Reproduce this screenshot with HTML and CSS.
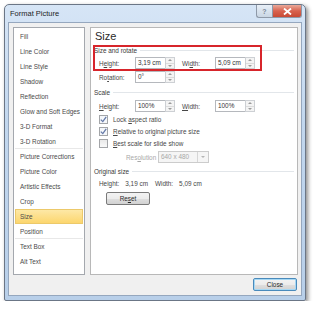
FILE: index.html
```html
<!DOCTYPE html>
<html lang="en">
<head>
    <meta charset="UTF-8">
    <title>Format Picture</title>
    <link rel="stylesheet" href="styles.css">
</head>
<body>
    <div class="window">
        <div class="titlebar">
            <span class="title">Format Picture</span>
            <div class="caption-btns">
                <span class="cap-help">?</span>
                <span class="cap-close">
                    <svg width="9" height="7" viewBox="0 0 9 7"><path d="M1 0.5 L8 6.5 M8 0.5 L1 6.5" stroke="#fff" stroke-width="1.8"/></svg>
                </span>
            </div>
        </div>
        <div class="client">
            <div class="main">
                <ul class="nav">
                    <li>Fill</li>
                    <li>Line Color</li>
                    <li>Line Style</li>
                    <li>Shadow</li>
                    <li>Reflection</li>
                    <li>Glow and Soft Edges</li>
                    <li>3-D Format</li>
                    <li class="sep">3-D Rotation</li>
                    <li>Picture Corrections</li>
                    <li>Picture Color</li>
                    <li>Artistic Effects</li>
                    <li>Crop</li>
                    <li class="active">Size</li>
                    <li class="sep">Position</li>
                    <li>Text Box</li>
                    <li>Alt Text</li>
                </ul>
                <div class="panel">
                    <div class="heading">Size</div>
                    <div class="group">Size and rotate</div>
                    <div class="row">
                        <span class="label">H<u>e</u>ight:</span>
                        <span class="spin"><span class="field">3,19 cm</span><span class="arrows"><i class="up"></i><i class="down"></i></span></span>
                        <span class="label label-w">Wi<u>d</u>th:</span>
                        <span class="spin"><span class="field">5,09 cm</span><span class="arrows"><i class="up"></i><i class="down"></i></span></span>
                    </div>
                    <div class="row">
                        <span class="label">Ro<u>t</u>ation:</span>
                        <span class="spin"><span class="field">0°</span><span class="arrows"><i class="up"></i><i class="down"></i></span></span>
                    </div>
                    <div class="group group-scale">Scale</div>
                    <div class="row row-scale">
                        <span class="label"><u>H</u>eight:</span>
                        <span class="spin"><span class="field">100%</span><span class="arrows"><i class="up"></i><i class="down"></i></span></span>
                        <span class="label label-w"><u>W</u>idth:</span>
                        <span class="spin"><span class="field">100%</span><span class="arrows"><i class="up"></i><i class="down"></i></span></span>
                    </div>
                    <div class="check-row check-first">
                        <span class="check on"><svg width="7" height="7" viewBox="0 0 7 7"><path d="M0.8 3.6 L2.8 5.6 L6.2 0.9" fill="none" stroke="#6479a8" stroke-width="1.3"/></svg></span>
                        <span>Lock <u>a</u>spect ratio</span>
                    </div>
                    <div class="check-row">
                        <span class="check on"><svg width="7" height="7" viewBox="0 0 7 7"><path d="M0.8 3.6 L2.8 5.6 L6.2 0.9" fill="none" stroke="#6479a8" stroke-width="1.3"/></svg></span>
                        <span><u>R</u>elative to original picture size</span>
                    </div>
                    <div class="check-row">
                        <span class="check"></span>
                        <span><u>B</u>est scale for slide show</span>
                    </div>
                    <div class="res-row">
                        <span class="res-label">Res<u>o</u>lution</span>
                        <span class="combo"><span class="combo-text">640 x 480</span><span class="combo-arrow"><i></i></span></span>
                    </div>
                    <div class="group group-orig">Original size</div>
                    <div class="info-row">
                        <span class="info-label">Height:</span><span class="info-val">3,19 cm</span>
                        <span class="info-label">Width:</span><span>5,09 cm</span>
                    </div>
                    <div class="reset-row">
                        <span class="btn reset">Re<u>s</u>et</span>
                    </div>
                    <div class="mark"></div>
                </div>
            </div>
            <div class="footer">
                <span class="btn btn-default">Close</span>
            </div>
        </div>
    </div>
</body>
</html>
```

FILE: styles.css
```css
body {
    margin: 0;
    background: #ffffff;
    font-family: "Liberation Sans", Arial, sans-serif;
    font-size: 6.4px;
    color: #474747;
}
.window {
    margin: 4px 0 0 4px;
    width: 300px;
    border: 1px solid #6b7686;
    border-radius: 5px 5px 2px 2px;
    background: linear-gradient(#d6e5f6, #c2d7ee 40%, #b8cfe9);
    box-shadow: 2px 2px 4px rgba(0, 0, 0, 0.45);
}
.titlebar {
    position: relative;
    height: 17px;
    display: flex;
    align-items: center;
    padding-left: 5px;
}
.title {
    font-size: 7.5px;
    color: #1e1e1e;
}
.caption-btns {
    position: absolute;
    top: 0;
    right: 3px;
    display: flex;
}
.cap-help,
.cap-close {
    height: 12px;
    display: flex;
    align-items: center;
    justify-content: center;
    border: 1px solid #8e99a8;
    border-top: none;
}
.cap-help {
    width: 15px;
    border-radius: 0 0 0 3px;
    border-right: none;
    background: linear-gradient(#e8eff7, #c9d6e4);
    color: #7d8898;
    font-size: 7px;
    font-weight: bold;
}
.cap-close {
    width: 28px;
    border-radius: 0 0 3px 0;
    background: linear-gradient(#eaa999, #d8624e 50%, #c84a34);
}
.client {
    margin: 0 3px 4px 3px;
    border: 1px solid #95a7be;
    background: #f0f0f0;
    padding: 4px 3px 4px 4px;
}
.main {
    display: flex;
    gap: 5px;
    height: 248px;
}
.nav {
    list-style: none;
    margin: 0;
    padding: 1px 1px 0 1px;
    width: 68px;
    border: 1px solid #a4a8ae;
    background: #ffffff;
}
.nav li {
    height: 15px;
    line-height: 15px;
    padding-left: 5px;
    white-space: nowrap;
    color: #4a4a4a;
}
.nav li.sep {
    border-bottom: 1px solid #e8e8e8;
    height: 14px;
}
.nav li.active {
    background: linear-gradient(#fde8a6, #fcd66e);
    border: 1px solid #ecc96a;
    height: 13px;
    line-height: 13px;
    padding-left: 4px;
}
.panel {
    position: relative;
    flex: 1;
    border: 1px solid #b8b8b8;
    background: #ffffff;
    padding: 0 3px;
}
.heading {
    height: 17px;
    line-height: 17px;
    font-size: 11px;
    color: #2a2a2a;
    padding-left: 1px;
}
.group {
    display: flex;
    align-items: center;
    height: 10px;
    color: #3a3a3a;
}
.group::after {
    content: "";
    flex: 1;
    height: 1px;
    margin-left: 3px;
    background: #e2e6ea;
}
.group-scale {
    margin-top: 4px;
}
.group-orig {
    margin-top: 3px;
}
.row {
    display: flex;
    align-items: center;
    height: 12px;
    margin-top: 2px;
    padding-left: 5px;
}
.row-scale {
    margin-top: 3px;
}
.label {
    width: 36px;
}
.label-w {
    width: 33px;
    margin-left: 7px;
}
.spin {
    display: flex;
    width: 40px;
    height: 12px;
}
.field {
    flex: 1;
    border: 1px solid #b5b8bd;
    border-right: none;
    padding-left: 2px;
    line-height: 10px;
    color: #333333;
}
.arrows {
    width: 8px;
    display: flex;
    flex-direction: column;
    border: 1px solid #cdd0d4;
    background: #f4f4f4;
}
.arrows i {
    flex: 1;
    display: flex;
    align-items: center;
    justify-content: center;
}
.arrows i.up {
    border-bottom: 1px solid #dcdcdc;
}
.arrows i::before {
    content: "";
    border-left: 2px solid transparent;
    border-right: 2px solid transparent;
}
.arrows i.up::before {
    border-bottom: 2px solid #9a9a9a;
}
.arrows i.down::before {
    border-top: 2px solid #9a9a9a;
}
.check-row {
    display: flex;
    align-items: center;
    height: 12px;
    padding-left: 5px;
}
.check-first {
    margin-top: 1px;
}
.check {
    width: 7px;
    height: 7px;
    margin-right: 5px;
    border: 1px solid #a3a5a8;
    background: linear-gradient(#e9e9e9, #f9f9f9);
    display: flex;
    align-items: center;
    justify-content: center;
}
.check.on {
    background: #f5f7fa;
}
.res-row {
    display: flex;
    align-items: center;
    height: 12px;
    margin-top: 2px;
    padding-left: 32px;
}
.res-label {
    width: 32px;
    color: #a8a8a8;
}
.combo {
    display: flex;
    width: 49px;
    height: 10px;
    border: 1px solid #cccccc;
    background: #f5f5f5;
    color: #a8a8a8;
}
.combo-text {
    flex: 1;
    padding-left: 2px;
    line-height: 10px;
}
.combo-arrow {
    width: 10px;
    border-left: 1px solid #d6d6d6;
    display: flex;
    align-items: center;
    justify-content: center;
}
.combo-arrow i {
    border-left: 2px solid transparent;
    border-right: 2px solid transparent;
    border-top: 2px solid #b5b5b5;
}
.info-row {
    display: flex;
    align-items: center;
    height: 12px;
    margin-top: 1px;
    padding-left: 5px;
}
.info-label {
    margin-right: 6px;
}
.info-val {
    margin-right: 7px;
}
.reset-row {
    margin-top: 3px;
    padding-left: 12px;
    display: flex;
}
.btn {
    display: flex;
    align-items: center;
    justify-content: center;
    width: 42px;
    height: 11px;
    border: 1px solid #7a7a7a;
    border-radius: 2px;
    background: linear-gradient(#f3f3f3, #ececec 50%, #dfdfdf 51%, #d2d2d2);
    color: #2a2a2a;
}
.footer {
    display: flex;
    justify-content: flex-end;
    margin-top: 3px;
    padding-right: 1px;
}
.btn-default {
    border-color: #4a8abb;
    box-shadow: inset 0 0 0 1px #a6d8f4;
}
.mark {
    position: absolute;
    left: 2px;
    top: 17px;
    width: 165px;
    height: 22px;
    border: 2px solid #d7252b;
}
```
